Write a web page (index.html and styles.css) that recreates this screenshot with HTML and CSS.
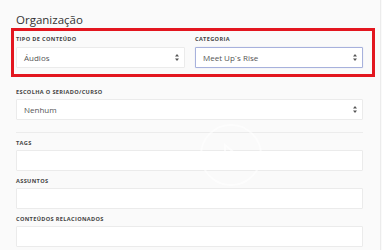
FILE: index.html
```html
<!DOCTYPE html>
<html lang="pt-BR">
<head>
  <meta charset="UTF-8" />
  <title>Organização</title>
  <link rel="stylesheet" href="styles.css">
</head>
<body>
  <div class="panel">
    <h2 class="title">Organização</h2>

    <!-- Tipo / Categoria -->
    <div class="row highlight">
      <div class="field">
        <label class="label">Tipo de conteúdo</label>
        <div class="select">
          <span>Áudios</span>
          <svg class="arrows" width="4" height="7" viewBox="0 0 4 7"><path d="M2 0L4 2.6H0Z M2 7L4 4.4H0Z" fill="#555"/></svg>
        </div>
      </div>
      <div class="field">
        <label class="label">Categoria</label>
        <div class="select focused">
          <span>Meet Up`s Rise</span>
          <svg class="arrows" width="4" height="7" viewBox="0 0 4 7"><path d="M2 0L4 2.6H0Z M2 7L4 4.4H0Z" fill="#555"/></svg>
        </div>
      </div>
    </div>

    <div class="field spaced">
      <label class="label">Escolha o seriado/curso</label>
      <div class="select">
        <span>Nenhum</span>
        <svg class="arrows" width="4" height="7" viewBox="0 0 4 7"><path d="M2 0L4 2.6H0Z M2 7L4 4.4H0Z" fill="#555"/></svg>
      </div>
    </div>

    <hr class="divider">

    <div class="field">
      <label class="label">Tags</label>
      <div class="input"></div>
    </div>
    <div class="field">
      <label class="label">Assuntos</label>
      <div class="input"></div>
    </div>
    <div class="field">
      <label class="label">Conteúdos relacionados</label>
      <div class="input"></div>
    </div>

    <!-- faint video watermark -->
    <svg class="watermark" width="64" height="64" viewBox="0 0 64 64">
      <circle cx="32" cy="32" r="30" fill="none" stroke="#fff" stroke-width="2"/>
      <path d="M26 22L38 32L26 42Z" fill="none" stroke="#fff" stroke-width="2"/>
    </svg>
  </div>
</body>
</html>
```

FILE: styles.css
```css
body {
  margin: 0;
  background-color: #fafafa;
  font-family: 'Open Sans', sans-serif;
  color: #333;
}

.panel {
  position: relative;
  width: 347px;
  min-height: 238px;
  padding: 12px 17px 0 16px;
  border-right: 1px solid #ececec;
}

.title {
  margin: 0 0 7px;
  font-size: 11.5px;
  line-height: 16px;
  font-weight: 400;
  color: #333;
}

.row {
  display: grid;
  grid-template-columns: 169px 168px;
  gap: 10px;
  margin-bottom: 20px;
}

.row .field {
  margin-bottom: 0;
}

.row .label {
  margin-bottom: 4px;
}

.highlight {
  position: relative;
}

.highlight::after {
  content: '';
  position: absolute;
  top: -7px;
  left: -5px;
  right: -12px;
  bottom: -9px;
  border: 3px solid #e3161f;
  pointer-events: none;
}

.field {
  margin-bottom: 6px;
}

.field.spaced {
  margin-bottom: 12px;
}

.label {
  display: block;
  font-size: 5.6px;
  line-height: 8px;
  font-weight: 700;
  letter-spacing: 0.35px;
  text-transform: uppercase;
  color: #444;
  margin-bottom: 3px;
}

.select, .input {
  box-sizing: border-box;
  height: 21px;
  background: #fff;
  border: 1px solid #ebebeb;
  border-radius: 1px;
}

.select {
  display: flex;
  align-items: center;
  justify-content: space-between;
  padding: 0 5px 0 7px;
  font-size: 8px;
  color: #555;
}

.select.focused {
  border-color: #a7b1dc;
  box-shadow: 0 0 1px rgba(120, 135, 210, 0.4);
}

.divider {
  margin: 0 0 6px;
  border: none;
  border-top: 1px solid #ececec;
}

.watermark {
  position: absolute;
  left: 199px;
  top: 123px;
  opacity: 0.6;
}
```
